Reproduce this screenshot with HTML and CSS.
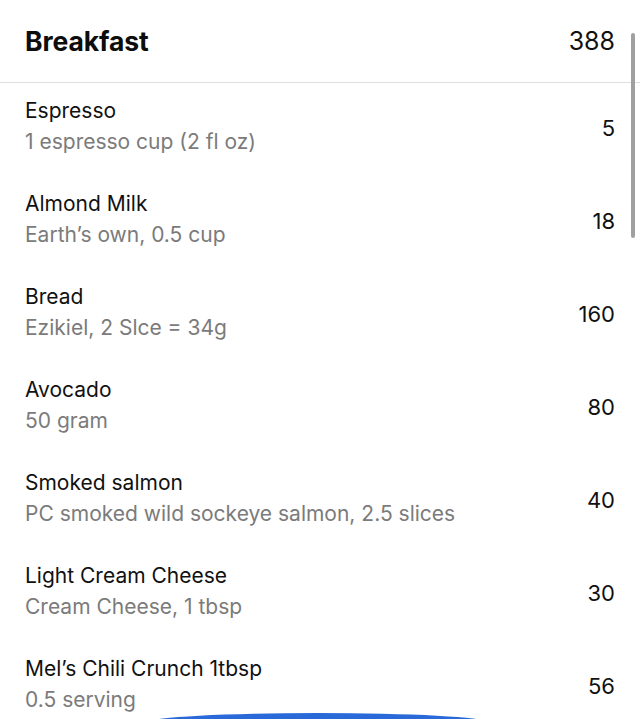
FILE: index.html
```html
<!DOCTYPE html>
<html>
<head>
<meta charset="utf-8">
<link rel="stylesheet" href="styles.css">
</head>
<body>
<div class="screen">
  <header class="meal-head">
    <h1 class="meal-title">Breakfast</h1>
    <span class="meal-total">388</span>
  </header>
  <ul class="food-list">
    <li class="food-row"><div class="food-info"><div class="food-name">Espresso</div><div class="food-desc">1 espresso cup (2 fl oz)</div></div><span class="food-cal">5</span></li>
    <li class="food-row"><div class="food-info"><div class="food-name">Almond Milk</div><div class="food-desc">Earth’s own, 0.5 cup</div></div><span class="food-cal">18</span></li>
    <li class="food-row"><div class="food-info"><div class="food-name">Bread</div><div class="food-desc">Ezikiel, 2 Slce = 34g</div></div><span class="food-cal">160</span></li>
    <li class="food-row"><div class="food-info"><div class="food-name">Avocado</div><div class="food-desc">50 gram</div></div><span class="food-cal">80</span></li>
    <li class="food-row"><div class="food-info"><div class="food-name">Smoked salmon</div><div class="food-desc">PC smoked wild sockeye salmon, 2.5 slices</div></div><span class="food-cal">40</span></li>
    <li class="food-row"><div class="food-info"><div class="food-name">Light Cream Cheese</div><div class="food-desc">Cream Cheese, 1 tbsp</div></div><span class="food-cal">30</span></li>
    <li class="food-row"><div class="food-info"><div class="food-name">Mel’s Chili Crunch 1tbsp</div><div class="food-desc">0.5 serving</div></div><span class="food-cal">56</span></li>
  </ul>
  <div class="scrollbar"></div>
  <div class="fab"></div>
</div>
</body>
</html>
```
FILE: styles.css
```css
* { box-sizing: border-box; }
html, body { margin: 0; padding: 0; background: #fff; }
body {
  font-family: Inter, "Noto Sans", "Liberation Sans", sans-serif;
  color: #111;
}
.screen {
  position: relative;
  width: 640px;
  height: 719px;
  overflow: hidden;
}
.meal-head {
  height: 83px;
  display: flex;
  align-items: center;
  justify-content: space-between;
  padding: 0 25px;
  border-bottom: 1px solid #dedede;
}
.meal-title {
  margin: 0;
  font-size: 26.5px;
  font-weight: 700;
  letter-spacing: -0.1px;
  color: #0d0d0d;
}
.meal-total {
  font-size: 25px;
  color: #111;
}
.food-list {
  list-style: none;
  margin: 0;
  padding: 0;
}
.food-row {
  height: 93px;
  display: flex;
  align-items: center;
  justify-content: space-between;
  padding: 1px 25px 8px 25px;
}
.food-info {
  display: flex;
  flex-direction: column;
  gap: 7px;
}
.food-name {
  font-size: 21px;
  line-height: 24px;
  color: #111;
}
.food-desc {
  font-size: 21px;
  line-height: 24px;
  color: #7b7b7b;
}
.food-cal {
  font-size: 22px;
  padding-top: 3px;
  color: #111;
}
.scrollbar {
  position: absolute;
  left: 631px;
  top: 33px;
  width: 4px;
  height: 205px;
  border-radius: 2px;
  background: #a0a0a0;
}
.fab {
  position: absolute;
  left: 150px;
  top: 713px;
  width: 336px;
  height: 40px;
  border-radius: 168px / 9px;
  background: #2a6ad8;
}
```
